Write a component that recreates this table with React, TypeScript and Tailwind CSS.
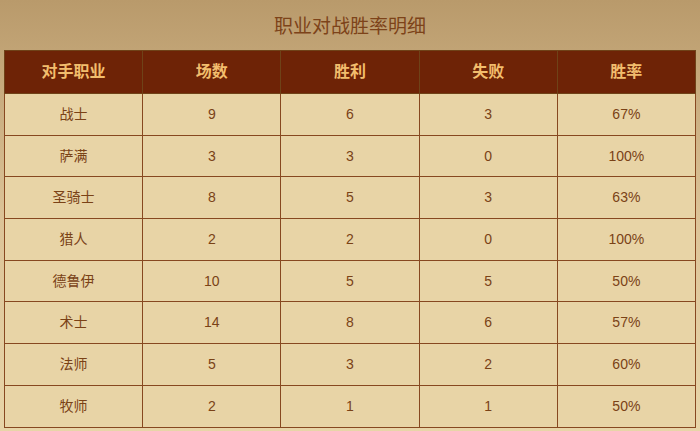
const rows = [
  ["战士", "9", "6", "3", "67%"],
  ["萨满", "3", "3", "0", "100%"],
  ["圣骑士", "8", "5", "3", "63%"],
  ["猎人", "2", "2", "0", "100%"],
  ["德鲁伊", "10", "5", "5", "50%"],
  ["术士", "14", "8", "6", "57%"],
  ["法师", "5", "3", "2", "60%"],
  ["牧师", "2", "1", "1", "50%"],
];

const headers = ["对手职业", "场数", "胜利", "失败", "胜率"];

export default function App() {
  return (
    <div
      className="w-[700px] h-[431px] overflow-hidden bg-gradient-to-b from-[#b99a6b] via-[#dcc397] to-[#e8d5a8] px-[4px]"
      style={{ fontFamily: '"Liberation Sans", "Noto Sans CJK SC", sans-serif' }}
    >
      <h1 className="h-[50px] flex items-center justify-center text-[19px] text-[#7d4319] pt-[4px]">
        职业对战胜率明细
      </h1>
      <table className="w-[692px] border-collapse table-fixed">
        <thead>
          <tr className="h-[43px] bg-[#6e2306]">
            {headers.map((h) => (
              <th
                key={h}
                className="border-[1.5px] border-[#6f4218] text-[16px] font-semibold text-[#f2bd6d]"
              >
                {h}
              </th>
            ))}
          </tr>
        </thead>
        <tbody>
          {rows.map((r) => (
            <tr key={r[0]} className="h-[41.7px] bg-[#e8d4a6]">
              {r.map((c, i) => (
                <td
                  key={i}
                  className="border-[1.5px] border-[#874820] text-center text-[14px] text-[#7a4216]"
                >
                  {c}
                </td>
              ))}
            </tr>
          ))}
        </tbody>
      </table>
    </div>
  );
}
